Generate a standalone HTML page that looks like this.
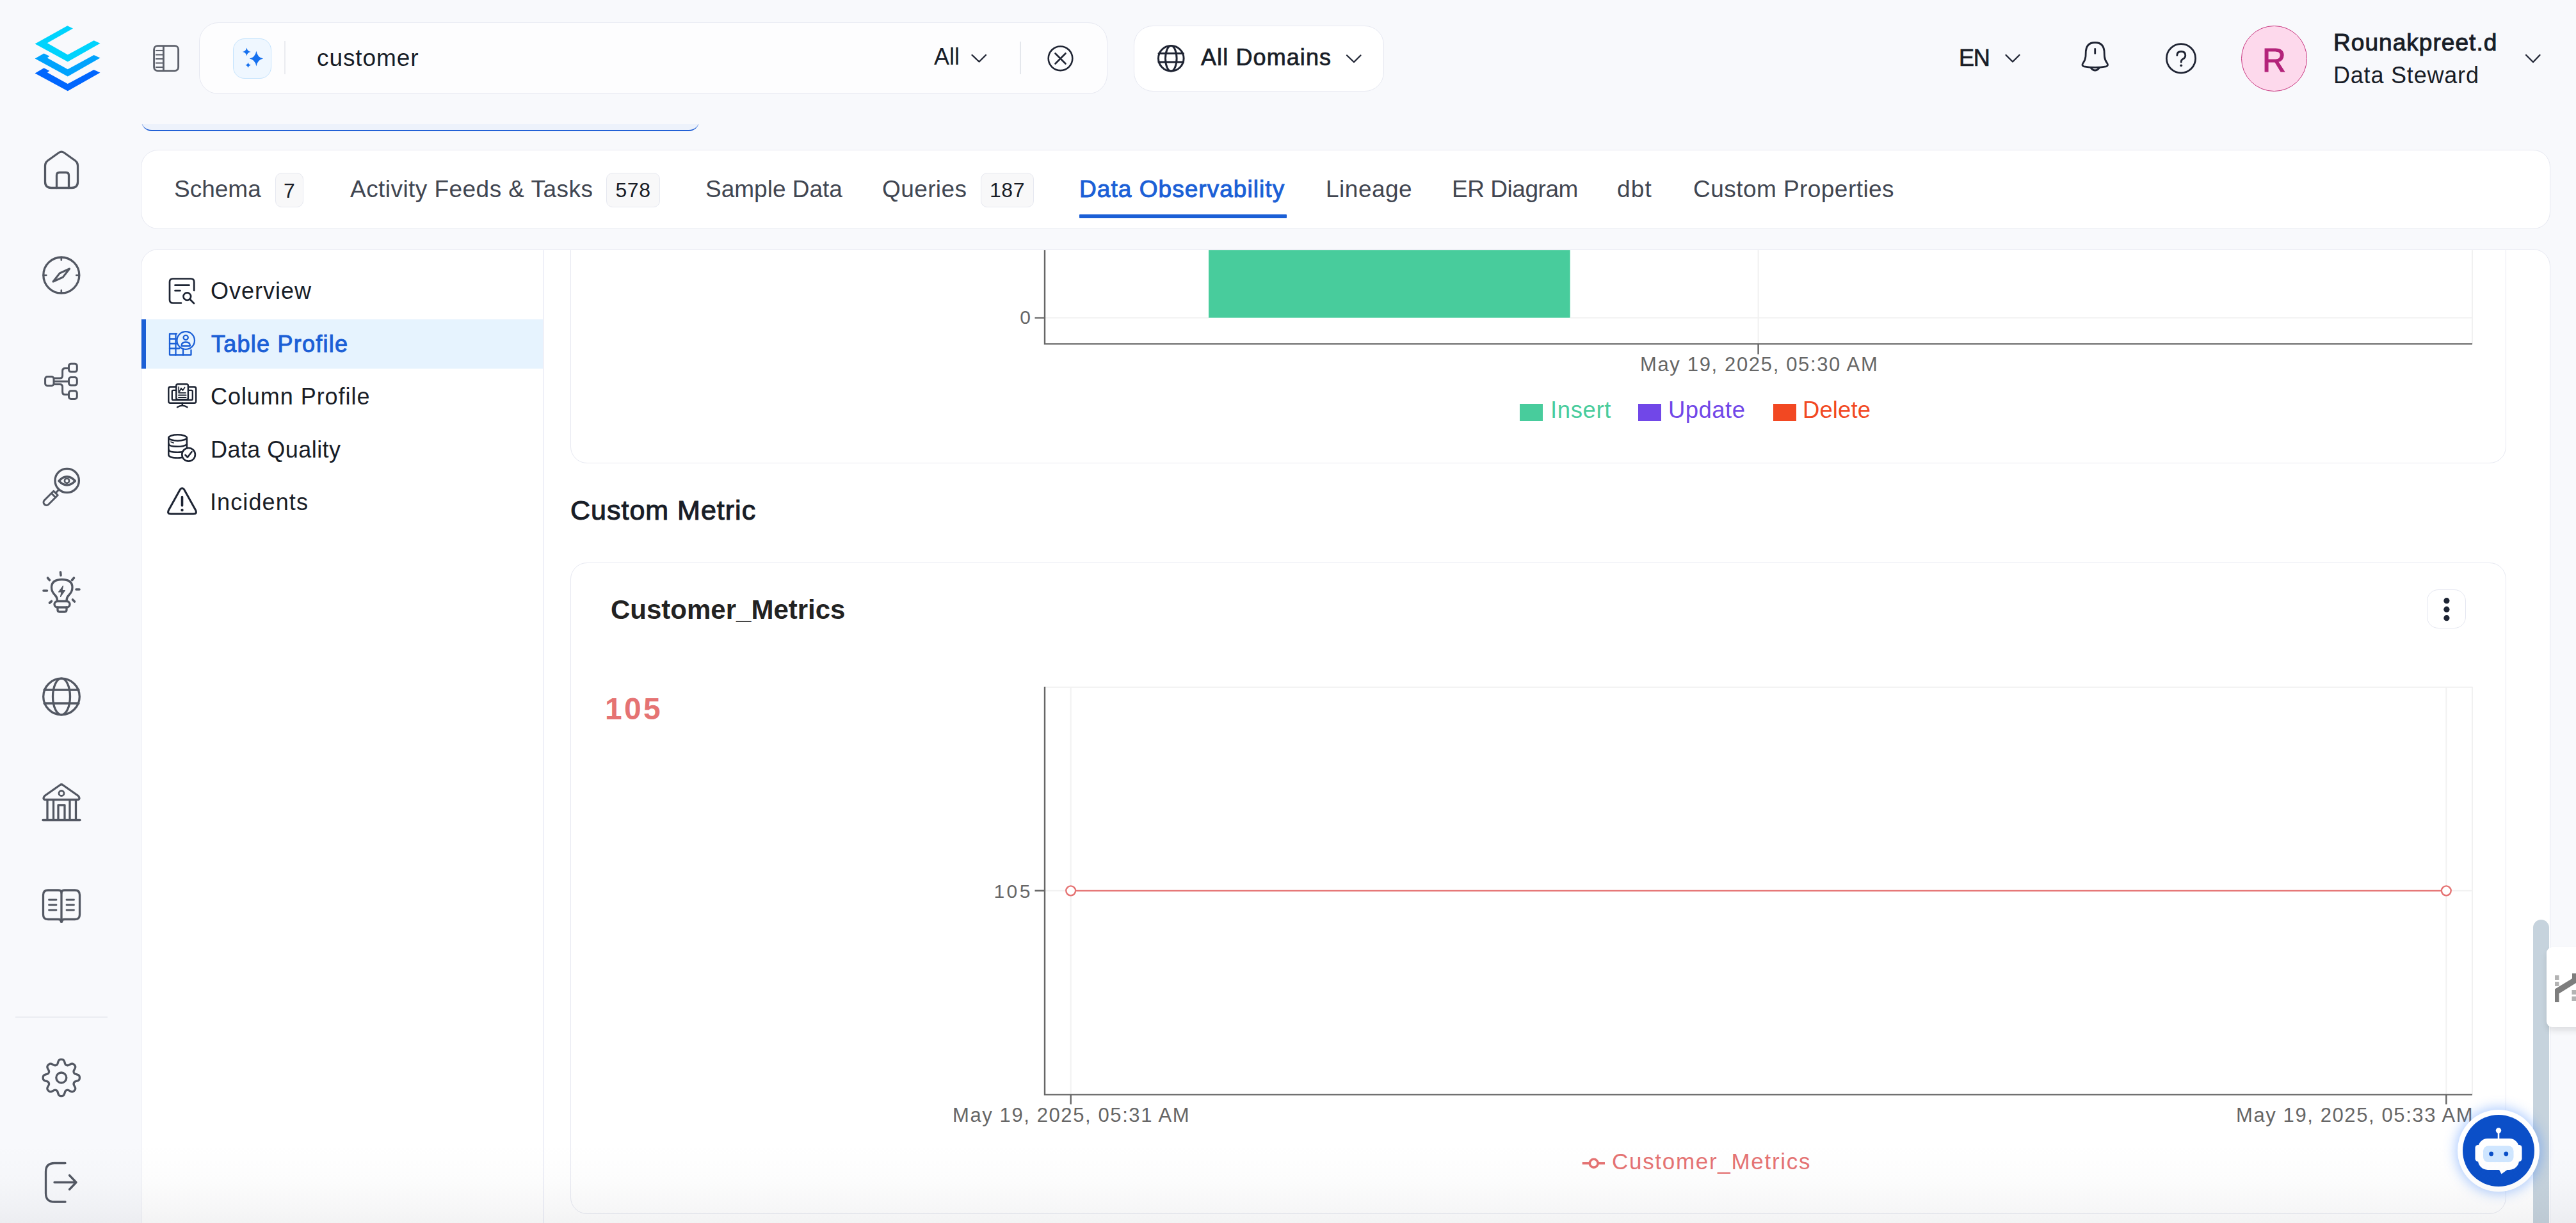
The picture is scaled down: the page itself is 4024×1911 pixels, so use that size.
<!DOCTYPE html>
<html><head><meta charset="utf-8">
<style>
html{margin:0;padding:0;overflow:hidden;width:4024px;height:1911px}body{margin:0;padding:0}
body{width:4024px;height:1911px;overflow:hidden;position:relative;background:#f8f9fc;font-family:"Liberation Sans",sans-serif;color:#181d27}
.a{position:absolute}
.t{position:absolute;white-space:nowrap;line-height:1;font-family:"Liberation Sans",sans-serif}
.card{position:absolute;background:#fff;border:1.5px solid #e6e8f1;box-sizing:border-box}
svg{position:absolute;overflow:visible}
</style></head>
<body>
<div id="root" style="position:absolute;left:0;top:0;width:4024px;height:1911px;overflow:hidden">

<!-- partial element hidden under header -->
<div class="a" style="left:221px;top:194px;width:871px;height:12px;overflow:hidden">
  <div class="a" style="left:0;top:-31px;width:871px;height:40px;background:#edf2fb;border-bottom:2px solid #2361d6;border-radius:0 0 16px 16px"></div>
</div>

<!-- HEADER -->
<!-- search box -->
<div class="card" style="left:311px;top:35px;width:1419px;height:112px;border-radius:30px;background:#fdfdfe"></div>
<div class="a" style="left:364px;top:60px;width:60px;height:63px;border-radius:18px;background:#eff7ff;border:1.6px solid #c4e3fd;box-sizing:border-box"></div>
<div class="a" style="left:444px;top:64px;width:2px;height:52px;background:#eaecf0"></div>
<div class="t" style="left:495px;top:71.7px;font-size:37px;letter-spacing:0.9px;color:#181d27">customer</div>
<div class="t" style="left:1459px;top:70.5px;font-size:36px;color:#181d27">All</div>
<div class="a" style="left:1593px;top:65px;width:2px;height:51px;background:#e4e7ec"></div>

<!-- domain dropdown -->
<div class="card" style="left:1771px;top:40px;width:391px;height:103px;border-radius:30px"></div>
<div class="t" style="left:1876px;top:72.1px;font-size:36px;letter-spacing:1.1px;-webkit-text-stroke:0.7px #181d27;color:#181d27">All Domains</div>

<!-- right header -->
<div class="t" style="left:3060px;top:72.5px;font-size:36px;letter-spacing:-1.2px;-webkit-text-stroke:0.7px #181d27;color:#181d27">EN</div>
<div class="a" style="left:3501px;top:40px;width:103px;height:103px;border-radius:50%;background:#fdd9ec;border:1.5px solid #c8357f;box-sizing:border-box"></div>
<div class="t" style="left:3501px;width:103px;text-align:center;top:68.6px;font-size:51px;-webkit-text-stroke:1.2px #b3237a;color:#b3237a">R</div>
<div class="t" style="left:3645px;top:47.7px;font-size:37px;font-weight:400;letter-spacing:1.05px;-webkit-text-stroke:1px #181d27;color:#181d27">Rounakpreet.d</div>
<div class="t" style="left:3645px;top:99.5px;font-size:36px;letter-spacing:0.8px;color:#181d27">Data Steward</div>

<!-- TABS CARD -->
<div class="card" style="left:220px;top:234px;width:3764px;height:124px;border-radius:27px"></div>
<div class="t" style="left:272px;top:277.2px;font-size:37px;color:#414651">Schema</div>
<div class="a" style="left:430px;top:270px;width:44px;height:54px;border-radius:10px;background:#f8f8f9;border:1.5px solid #e6e8f0;box-sizing:border-box"></div>
<div class="t" style="left:430px;width:44px;text-align:center;top:281.9px;font-size:32px;color:#181d27">7</div>
<div class="t" style="left:547px;top:277.2px;font-size:37px;letter-spacing:0.45px;color:#414651">Activity Feeds &amp; Tasks</div>
<div class="a" style="left:947px;top:270px;width:84px;height:54px;border-radius:10px;background:#f8f8f9;border:1.5px solid #e6e8f0;box-sizing:border-box"></div>
<div class="t" style="left:947px;width:84px;text-align:center;top:281.4px;font-size:32px;letter-spacing:0.5px;color:#181d27">578</div>
<div class="t" style="left:1102px;top:277.2px;font-size:37px;color:#414651">Sample Data</div>
<div class="t" style="left:1378px;top:277.2px;font-size:37px;letter-spacing:0.4px;color:#414651">Queries</div>
<div class="a" style="left:1532px;top:270px;width:83px;height:54px;border-radius:10px;background:#f8f8f9;border:1.5px solid #e6e8f0;box-sizing:border-box"></div>
<div class="t" style="left:1532px;width:83px;text-align:center;top:281.4px;font-size:32px;letter-spacing:0.5px;color:#181d27">187</div>
<div class="t" style="left:1686px;top:277.2px;font-size:37px;font-weight:400;letter-spacing:1.05px;-webkit-text-stroke:1px #1b5fd6;color:#1b5fd6">Data Observability</div>
<div class="a" style="left:1686px;top:335px;width:324px;height:6px;background:#1b5fd6;border-radius:1px"></div>
<div class="t" style="left:2071px;top:277.2px;font-size:37px;letter-spacing:0.5px;color:#414651">Lineage</div>
<div class="t" style="left:2268px;top:277.2px;font-size:37px;letter-spacing:-0.45px;color:#414651">ER Diagram</div>
<div class="t" style="left:2526px;top:277.2px;font-size:37px;letter-spacing:1.2px;color:#414651">dbt</div>
<div class="t" style="left:2645px;top:277.2px;font-size:37px;letter-spacing:0.45px;color:#414651">Custom Properties</div>

<!-- MAIN CARD -->
<div class="a" style="left:220px;top:388.5px;width:3764px;height:1560px;overflow:hidden;border:1.5px solid #e6e8f1;border-radius:27px;background:#fff;box-sizing:border-box" id="main">
</div>

<!-- left panel -->
<div class="a" style="left:848px;top:391px;width:2px;height:1520px;background:#eff0f8"></div>
<div class="a" style="left:223px;top:499px;width:625px;height:77px;background:#e6f3fe"></div>
<div class="a" style="left:221px;top:499px;width:7px;height:77px;background:#1b5fd6"></div>
<div class="t" style="left:329px;top:436.5px;font-size:36px;letter-spacing:1px;color:#181d27">Overview</div>
<div class="t" style="left:330px;top:520.2px;font-size:36px;font-weight:400;letter-spacing:1.25px;-webkit-text-stroke:1px #1b5fd6;color:#1b5fd6">Table Profile</div>
<div class="t" style="left:329px;top:601.5px;font-size:36px;letter-spacing:0.95px;color:#181d27">Column Profile</div>
<div class="t" style="left:329px;top:684.5px;font-size:36px;letter-spacing:0.45px;color:#181d27">Data Quality</div>
<div class="t" style="left:328px;top:767px;font-size:36px;letter-spacing:1.1px;color:#181d27">Incidents</div>

<!-- chart card 1 (clipped at top) -->
<div class="a" style="left:223px;top:391px;width:3758px;height:340px;overflow:hidden">
  <div class="card" style="left:668px;top:-100px;width:3024px;height:433px;border-radius:26px"></div>
</div>

<!-- Custom Metric -->
<div class="t" style="left:891px;top:775.6px;font-size:43px;font-weight:400;letter-spacing:1px;-webkit-text-stroke:1.1px #181d27;color:#181d27">Custom Metric</div>

<!-- chart card 2 -->
<div class="card" style="left:891px;top:879px;width:3024px;height:1018px;border-radius:26px"></div>
<div class="t" style="left:954px;top:931.9px;font-size:42px;font-weight:700;letter-spacing:0px;color:#222">Customer_Metrics</div>
<div class="a" style="left:3791px;top:921px;width:61px;height:61px;border-radius:18px;border:1.5px solid #e4e6f0;box-sizing:border-box;background:#fff"></div>
<div class="t" style="left:945px;top:1083.8px;font-size:48px;font-weight:700;letter-spacing:3.3px;color:#e57373">105</div>

<!-- chart text -->
<div class="t" style="left:1560px;width:50px;text-align:right;top:481.4px;font-size:30px;color:#666">0</div>
<div class="t" style="left:2562px;top:553.8px;font-size:31px;letter-spacing:1.65px;color:#666">May 19, 2025, 05:30 AM</div>
<div class="t" style="left:2422px;top:623.1px;font-size:36.5px;letter-spacing:0.6px;color:#48cc9c">Insert</div>
<div class="t" style="left:2606px;top:623.1px;font-size:36.5px;letter-spacing:0.45px;color:#7147e8">Update</div>
<div class="t" style="left:2816px;top:623.1px;font-size:36.5px;letter-spacing:0.1px;color:#f24822">Delete</div>
<div class="a" style="left:2374px;top:631px;width:36px;height:27px;background:#48cc9c"></div>
<div class="a" style="left:2559px;top:631px;width:36px;height:27px;background:#7147e8"></div>
<div class="a" style="left:2770px;top:631px;width:36px;height:27px;background:#f24822"></div>

<div class="t" style="left:1503px;width:110px;text-align:right;top:1377.6px;font-size:30px;letter-spacing:3.5px;color:#666">105</div>
<div class="t" style="left:1488px;top:1727.2px;font-size:31px;letter-spacing:1.6px;color:#666">May 19, 2025, 05:31 AM</div>
<div class="t" style="left:3493px;top:1727.2px;font-size:31px;letter-spacing:1.6px;color:#666">May 19, 2025, 05:33 AM</div>
<div class="t" style="left:2518px;top:1797.4px;font-size:35px;letter-spacing:1.7px;color:#e57373">Customer_Metrics</div>

<!-- ICONS & CHART GRAPHICS -->
<svg id="gfx" width="4024" height="1911" style="left:0;top:0" viewBox="0 0 4024 1911">
<!-- logo -->
<g transform="translate(54.6,40.2)">
<path fill="#00d3fd" d="M50.7,0 L59.4,4.3 L19.2,27 L51.2,45.4 L92,23 L101.9,27.6 L51.2,56.4 L0,28.2 Z"/>
<path fill="#00a2fd" d="M14,43.3 L22.7,47.6 L19.2,50.3 L51.2,68 L92,45.9 L101.9,50.3 L51.2,79.4 L0,51.2 Z"/>
<path fill="#0066fe" d="M14,66 L22.7,70.5 L19.2,73 L51.2,90.8 L92,68.7 L101.9,73.4 L51.2,102.1 L0,74.2 Z"/>
</g>
<!-- sidebar toggle -->
<g fill="none" stroke="#5d616b" stroke-width="2.9" stroke-linejoin="round">
<rect x="240.6" y="71.6" width="38" height="39" rx="5.5"/>
<line x1="255.4" y1="71.6" x2="255.4" y2="110.6"/>
<g stroke-width="2.1"><line x1="243" y1="79" x2="254" y2="79"/><line x1="243" y1="85.5" x2="254" y2="85.5"/><line x1="243" y1="92" x2="254" y2="92"/><line x1="243" y1="98.5" x2="254" y2="98.5"/><line x1="243" y1="105" x2="254" y2="105"/></g>
</g>
<!-- nav icons -->
<g fill="none" stroke="#535863" stroke-width="3.3" stroke-linecap="round" stroke-linejoin="round">
 <!-- home -->
 <path d="M70.5,259 Q70.5,254 74.5,251 L92,238.5 Q96,235.8 100,238.5 L117.5,251 Q121.5,254 121.5,259 L121.5,284 Q121.5,293.5 112,293.5 L80,293.5 Q70.5,293.5 70.5,284 Z"/>
 <path d="M88.5,293.5 L88.5,274 Q88.5,269.5 93,269.5 L103,269.5 Q107.5,269.5 107.5,274 L107.5,293.5"/>
 <!-- compass -->
 <circle cx="95.8" cy="430" r="28"/>
 <path d="M95.8,402 v4.5 M95.8,453.5 v4.5 M67.8,430 h4.5 M119.3,430 h4.5" stroke-width="2.6"/>
 <path d="M83,440 L93.3,426.9 L108.5,420 L98.3,433.1 Z" stroke-width="3.1"/>
 <!-- lineage -->
 <g stroke-width="3"><rect x="70.6" y="588.5" width="13.4" height="14.2" rx="3.5"/>
 <rect x="107.5" y="568.3" width="12.8" height="12.8" rx="3.5"/>
 <rect x="107.5" y="589.5" width="12.8" height="12.6" rx="3.5"/>
 <rect x="107.5" y="610.8" width="12.8" height="12.6" rx="3.5"/>
 <path d="M84.5,591 L93.5,591 Q97.6,591 97.6,587 L97.6,579.5 Q97.6,575.5 101.5,575.5 L107,575.5 M84.5,596 L107,596 M84.5,600.5 L93.5,600.5 Q97.6,600.5 97.6,604.5 L97.6,612.5 Q97.6,616.5 101.5,616.5 L107,616.5" stroke-linecap="butt"/></g>
 <!-- observability -->
 <circle cx="104.7" cy="751" r="18.7"/>
 <path d="M92,751.5 Q104.5,738 117.5,751.5 Q104.5,764.5 92,751.5 Z" stroke-width="3.4"/>
 <circle cx="104.5" cy="751.3" r="3.6" stroke-width="2.6"/>
 <path d="M87.5,769.8 L92,765" stroke-width="3"/>
 <path d="M90.25,773.75 L83.75,767.25 L69.25,781.75 A4.6,4.6 0 0 0 75.75,788.25 Z" stroke-width="3"/>
 <path d="M80.5,771 L86.8,777.3" stroke-width="2.8"/>
 <!-- bulb -->
 <path d="M89.5,938 Q89.5,933.5 86,930 Q80.5,924.5 80.5,918 Q80.5,905.5 96.8,905.5 Q113,905.5 113,918 Q113,924.5 107.5,930 Q104,933.5 104,938" />
 <rect x="85" y="939.5" width="24" height="9.5" rx="4.75"/>
 <path d="M90,949 L90,953 Q90,956 93,956 L101,956 Q104,956 104,953 L104,949"/>
 <path d="M98.5,915.5 L91.5,925 L96,925 L94.5,932.5 L101.5,922.5 L97,922.5 Z" fill="#535863" stroke-width="1.2"/>
 <path d="M94.5,894 L95,899 M74.5,903 L77.5,906.5 M112.5,906.5 L115.5,903 M68,923 L73.5,923 M119,921 L124,921 M77.5,942 L80.5,939.5 M113.5,937 L116.5,940" stroke-width="3.6"/>
 <!-- globe -->
 <circle cx="96" cy="1088.5" r="28.3"/>
 <ellipse cx="96" cy="1088.5" rx="13.5" ry="28.3"/>
 <path d="M69,1078 L123,1078 M69,1099 L123,1099"/>
 <!-- governance -->
 <path d="M70.5,1243 L94,1226.5 Q96,1225 98,1226.5 L121.5,1243 Q124,1245 124,1247 Q124,1249.5 121,1249.5 L71,1249.5 Q68,1249.5 68,1247 Q68,1245 70.5,1243 Z"/>
 <circle cx="96" cy="1239.5" r="4" stroke-width="2.8"/>
 <path d="M74,1251 L74,1280 M83.5,1251 L83.5,1280 M109,1251 L109,1280 M118.5,1251 L118.5,1280"/>
 <path d="M91,1280 L91,1258 L101,1258 L101,1280"/>
 <path d="M67,1281.5 L125,1281.5"/>
 <!-- glossary -->
 <path d="M96,1395 Q96,1391 91,1391 L75,1391 Q67.5,1391 67.5,1398.5 L67.5,1429 Q67.5,1436.5 75,1436.5 L91,1436.5 Q96,1436.5 96,1440 Q96,1436.5 101,1436.5 L117,1436.5 Q124.5,1436.5 124.5,1429 L124.5,1398.5 Q124.5,1391 117,1391 L101,1391 Q96,1391 96,1395 Z"/>
 <path d="M96,1395 L96,1438"/>
 <path d="M76.5,1406 L88,1406 M76.5,1414 L88,1414 M76.5,1422 L88,1422 M104,1406 L115.5,1406 M104,1414 L115.5,1414 M104,1422 L115.5,1422" stroke-width="2.8"/>
 <circle cx="96" cy="1439.5" r="2.5" fill="#535863" stroke="none"/>
 <!-- gear -->
 <path d="M95.80,1655.40L96.17,1655.41L96.55,1655.43L96.92,1655.48L97.29,1655.54L97.66,1655.62L98.02,1655.74L98.38,1655.88L98.74,1656.07L99.08,1656.31L99.41,1656.61L99.72,1656.97L100.01,1657.41L100.28,1657.93L100.52,1658.51L100.74,1659.14L100.94,1659.80L101.13,1660.45L101.31,1661.07L101.48,1661.63L101.66,1662.12L101.85,1662.54L102.05,1662.90L102.26,1663.20L102.47,1663.46L102.70,1663.68L102.93,1663.87L103.17,1664.03L103.41,1664.17L103.66,1664.30L103.91,1664.41L104.17,1664.51L104.44,1664.60L104.71,1664.67L105.00,1664.72L105.29,1664.75L105.60,1664.76L105.94,1664.73L106.30,1664.66L106.69,1664.55L107.13,1664.38L107.60,1664.16L108.12,1663.89L108.68,1663.58L109.28,1663.25L109.88,1662.93L110.48,1662.63L111.07,1662.39L111.62,1662.22L112.14,1662.12L112.62,1662.08L113.06,1662.10L113.47,1662.18L113.85,1662.29L114.21,1662.44L114.55,1662.62L114.87,1662.82L115.18,1663.04L115.47,1663.27L115.75,1663.52L116.02,1663.78L116.28,1664.05L116.53,1664.33L116.76,1664.62L116.98,1664.93L117.18,1665.25L117.36,1665.59L117.51,1665.95L117.62,1666.33L117.70,1666.74L117.72,1667.18L117.68,1667.66L117.58,1668.18L117.41,1668.73L117.17,1669.32L116.87,1669.92L116.55,1670.52L116.22,1671.12L115.91,1671.68L115.64,1672.20L115.42,1672.67L115.25,1673.11L115.14,1673.50L115.07,1673.86L115.04,1674.20L115.05,1674.51L115.08,1674.80L115.13,1675.09L115.20,1675.36L115.29,1675.63L115.39,1675.89L115.50,1676.14L115.63,1676.39L115.77,1676.63L115.93,1676.87L116.12,1677.10L116.34,1677.33L116.60,1677.54L116.90,1677.75L117.26,1677.95L117.68,1678.14L118.17,1678.32L118.73,1678.49L119.35,1678.67L120.00,1678.86L120.66,1679.06L121.29,1679.28L121.87,1679.52L122.39,1679.79L122.83,1680.08L123.19,1680.39L123.49,1680.72L123.73,1681.06L123.92,1681.42L124.06,1681.78L124.18,1682.14L124.26,1682.51L124.32,1682.88L124.37,1683.25L124.39,1683.63L124.40,1684.00L124.39,1684.37L124.37,1684.75L124.32,1685.12L124.26,1685.49L124.18,1685.86L124.06,1686.22L123.92,1686.58L123.73,1686.94L123.49,1687.28L123.19,1687.61L122.83,1687.92L122.39,1688.21L121.87,1688.48L121.29,1688.72L120.66,1688.94L120.00,1689.14L119.35,1689.33L118.73,1689.51L118.17,1689.68L117.68,1689.86L117.26,1690.05L116.90,1690.25L116.60,1690.46L116.34,1690.67L116.12,1690.90L115.93,1691.13L115.77,1691.37L115.63,1691.61L115.50,1691.86L115.39,1692.11L115.29,1692.37L115.20,1692.64L115.13,1692.91L115.08,1693.20L115.05,1693.49L115.04,1693.80L115.07,1694.14L115.14,1694.50L115.25,1694.89L115.42,1695.33L115.64,1695.80L115.91,1696.32L116.22,1696.88L116.55,1697.48L116.87,1698.08L117.17,1698.68L117.41,1699.27L117.58,1699.82L117.68,1700.34L117.72,1700.82L117.70,1701.26L117.62,1701.67L117.51,1702.05L117.36,1702.41L117.18,1702.75L116.98,1703.07L116.76,1703.38L116.53,1703.67L116.28,1703.95L116.02,1704.22L115.75,1704.48L115.47,1704.73L115.18,1704.96L114.87,1705.18L114.55,1705.38L114.21,1705.56L113.85,1705.71L113.47,1705.82L113.06,1705.90L112.62,1705.92L112.14,1705.88L111.62,1705.78L111.07,1705.61L110.48,1705.37L109.88,1705.07L109.28,1704.75L108.68,1704.42L108.12,1704.11L107.60,1703.84L107.13,1703.62L106.69,1703.45L106.30,1703.34L105.94,1703.27L105.60,1703.24L105.29,1703.25L105.00,1703.28L104.71,1703.33L104.44,1703.40L104.17,1703.49L103.91,1703.59L103.66,1703.70L103.41,1703.83L103.17,1703.97L102.93,1704.13L102.70,1704.32L102.47,1704.54L102.26,1704.80L102.05,1705.10L101.85,1705.46L101.66,1705.88L101.48,1706.37L101.31,1706.93L101.13,1707.55L100.94,1708.20L100.74,1708.86L100.52,1709.49L100.28,1710.07L100.01,1710.59L99.72,1711.03L99.41,1711.39L99.08,1711.69L98.74,1711.93L98.38,1712.12L98.02,1712.26L97.66,1712.38L97.29,1712.46L96.92,1712.52L96.55,1712.57L96.17,1712.59L95.80,1712.60L95.43,1712.59L95.05,1712.57L94.68,1712.52L94.31,1712.46L93.94,1712.38L93.58,1712.26L93.22,1712.12L92.86,1711.93L92.52,1711.69L92.19,1711.39L91.88,1711.03L91.59,1710.59L91.32,1710.07L91.08,1709.49L90.86,1708.86L90.66,1708.20L90.47,1707.55L90.29,1706.93L90.12,1706.37L89.94,1705.88L89.75,1705.46L89.55,1705.10L89.34,1704.80L89.13,1704.54L88.90,1704.32L88.67,1704.13L88.43,1703.97L88.19,1703.83L87.94,1703.70L87.69,1703.59L87.43,1703.49L87.16,1703.40L86.89,1703.33L86.60,1703.28L86.31,1703.25L86.00,1703.24L85.66,1703.27L85.30,1703.34L84.91,1703.45L84.47,1703.62L84.00,1703.84L83.48,1704.11L82.92,1704.42L82.32,1704.75L81.72,1705.07L81.12,1705.37L80.53,1705.61L79.98,1705.78L79.46,1705.88L78.98,1705.92L78.54,1705.90L78.13,1705.82L77.75,1705.71L77.39,1705.56L77.05,1705.38L76.73,1705.18L76.42,1704.96L76.13,1704.73L75.85,1704.48L75.58,1704.22L75.32,1703.95L75.07,1703.67L74.84,1703.38L74.62,1703.07L74.42,1702.75L74.24,1702.41L74.09,1702.05L73.98,1701.67L73.90,1701.26L73.88,1700.82L73.92,1700.34L74.02,1699.82L74.19,1699.27L74.43,1698.68L74.73,1698.08L75.05,1697.48L75.38,1696.88L75.69,1696.32L75.96,1695.80L76.18,1695.33L76.35,1694.89L76.46,1694.50L76.53,1694.14L76.56,1693.80L76.55,1693.49L76.52,1693.20L76.47,1692.91L76.40,1692.64L76.31,1692.37L76.21,1692.11L76.10,1691.86L75.97,1691.61L75.83,1691.37L75.67,1691.13L75.48,1690.90L75.26,1690.67L75.00,1690.46L74.70,1690.25L74.34,1690.05L73.92,1689.86L73.43,1689.68L72.87,1689.51L72.25,1689.33L71.60,1689.14L70.94,1688.94L70.31,1688.72L69.73,1688.48L69.21,1688.21L68.77,1687.92L68.41,1687.61L68.11,1687.28L67.87,1686.94L67.68,1686.58L67.54,1686.22L67.42,1685.86L67.34,1685.49L67.28,1685.12L67.23,1684.75L67.21,1684.37L67.20,1684.00L67.21,1683.63L67.23,1683.25L67.28,1682.88L67.34,1682.51L67.42,1682.14L67.54,1681.78L67.68,1681.42L67.87,1681.06L68.11,1680.72L68.41,1680.39L68.77,1680.08L69.21,1679.79L69.73,1679.52L70.31,1679.28L70.94,1679.06L71.60,1678.86L72.25,1678.67L72.87,1678.49L73.43,1678.32L73.92,1678.14L74.34,1677.95L74.70,1677.75L75.00,1677.54L75.26,1677.33L75.48,1677.10L75.67,1676.87L75.83,1676.63L75.97,1676.39L76.10,1676.14L76.21,1675.89L76.31,1675.63L76.40,1675.36L76.47,1675.09L76.52,1674.80L76.55,1674.51L76.56,1674.20L76.53,1673.86L76.46,1673.50L76.35,1673.11L76.18,1672.67L75.96,1672.20L75.69,1671.68L75.38,1671.12L75.05,1670.52L74.73,1669.92L74.43,1669.32L74.19,1668.73L74.02,1668.18L73.92,1667.66L73.88,1667.18L73.90,1666.74L73.98,1666.33L74.09,1665.95L74.24,1665.59L74.42,1665.25L74.62,1664.93L74.84,1664.62L75.07,1664.33L75.32,1664.05L75.58,1663.78L75.85,1663.52L76.13,1663.27L76.42,1663.04L76.73,1662.82L77.05,1662.62L77.39,1662.44L77.75,1662.29L78.13,1662.18L78.54,1662.10L78.98,1662.08L79.46,1662.12L79.98,1662.22L80.53,1662.39L81.12,1662.63L81.72,1662.93L82.32,1663.25L82.92,1663.58L83.48,1663.89L84.00,1664.16L84.47,1664.38L84.91,1664.55L85.30,1664.66L85.66,1664.73L86.00,1664.76L86.31,1664.75L86.60,1664.72L86.89,1664.67L87.16,1664.60L87.43,1664.51L87.69,1664.41L87.94,1664.30L88.19,1664.17L88.43,1664.03L88.67,1663.87L88.90,1663.68L89.13,1663.46L89.34,1663.20L89.55,1662.90L89.75,1662.54L89.94,1662.12L90.12,1661.63L90.29,1661.07L90.47,1660.45L90.66,1659.80L90.86,1659.14L91.08,1658.51L91.32,1657.93L91.59,1657.41L91.88,1656.97L92.19,1656.61L92.52,1656.31L92.86,1656.07L93.22,1655.88L93.58,1655.74L93.94,1655.62L94.31,1655.54L94.68,1655.48L95.05,1655.43L95.43,1655.41L95.80,1655.40Z" />
 <circle cx="95.8" cy="1684" r="8"/>
 <!-- logout -->
 <path d="M102,1817.5 L85,1817.5 Q71.5,1817.5 71.5,1831 L71.5,1864.5 Q71.5,1878 85,1878 L102,1878"/>
 <path d="M85,1847.5 L119,1847.5 M108.5,1836.5 L119,1847.5 L108.5,1858.5"/>
</g>
<!-- nav divider -->
<rect x="24" y="1588.5" width="144" height="1.6" fill="#e6e8ee"/>
<!-- header icons -->
<g fill="#1570ef">
 <path d="M400.4,79.7 Q402.2,89.8 411,91.6 Q402.2,93.4 400.4,103.4 Q398.6,93.4 389.8,91.6 Q398.6,89.8 400.4,79.7 Z"/>
 <path d="M385.3,74.4 Q386.3,80 391.8,80.9 Q386.3,81.8 385.3,87.4 Q384.3,81.8 378.8,80.9 Q384.3,80 385.3,74.4 Z"/>
 <path d="M387.6,97.3 Q388.3,101.1 392.1,101.8 Q388.3,102.5 387.6,106.3 Q386.9,102.5 383.1,101.8 Q386.9,101.1 387.6,97.3 Z"/>
</g>
<g fill="none" stroke="#1f2433" stroke-width="2.6" stroke-linecap="round" stroke-linejoin="round">
 <circle cx="1656.5" cy="91.3" r="18.8"/>
 <path d="M1648.5,83.5 L1664.5,99.5 M1664.5,83.5 L1648.5,99.5"/>
 <g stroke-width="2.3"><path d="M1518.5,86 L1529.5,96.5 L1540,86"/>
 <path d="M2104,86.5 L2115,97 L2125.5,86.5"/>
 <path d="M3133.5,86 L3144,96.5 L3154.5,86"/>
 <path d="M3946,86 L3957,97 L3967.5,86"/></g>
 <g stroke-width="3"><circle cx="1829.3" cy="91.3" r="19.8"/>
 <ellipse cx="1829.3" cy="91.3" rx="8.8" ry="19.8"/>
 <path d="M1810,83.5 L1848.5,83.5 M1810,97 L1848.5,97"/></g>
 <g stroke-width="2.8">
 <path d="M3258.2,83 Q3258.2,66.5 3272.7,66.5 Q3287.2,66.5 3287.2,83 L3287.4,88 Q3288,94 3291.5,98.5 Q3294.2,102.5 3290,103.8 Q3272.7,107 3255.4,103.8 Q3251.2,102.5 3254,98.5 Q3257.5,94 3258,88 Z"/>
 <path d="M3266.5,106.5 Q3272.7,113.5 3279,106.5"/>
 <path d="M3272.7,76.5 L3272.7,83.5"/>
 <circle cx="3407" cy="91.3" r="22.6"/>
 <path d="M3400.8,86.5 Q3400.8,80.5 3407.2,80.5 Q3413.8,80.5 3413.8,86.5 Q3413.8,90.5 3409.5,92.5 Q3407.2,93.8 3407.2,97"/>
 </g>
 <circle cx="3407.2" cy="102.3" r="1.9" fill="#1f2433" stroke="none"/>
</g>
<!-- left menu icons -->
<g fill="none" stroke="#1d2433" stroke-width="2.7" stroke-linecap="round" stroke-linejoin="round">
 <!-- overview -->
 <path d="M303.2,454 L303.2,440.5 Q303.2,435.5 298.2,435.5 L270,435.5 Q265,435.5 265,440.5 L265,468.5 Q265,473.5 270,473.5 L283,473.5"/>
 <path d="M273.5,445.7 L295.5,445.7 M273.5,454.2 L281.5,454.2"/>
 <circle cx="292.3" cy="463.2" r="5.8"/>
 <path d="M296.8,467.8 L303,474"/>
 <!-- column profile -->
 <path d="M275,604.5 L266,604.5 Q263.3,604.5 263.3,607.5 L263.3,627 Q263.3,629.8 266,629.8 L303.5,629.8 Q306.2,629.8 306.2,627 L306.2,607.5 Q306.2,604.5 303.5,604.5 L294,604.5" stroke-width="2.5"/>
 <path d="M275,609.8 L270.5,609.8 Q268.8,609.8 268.8,611.5 L268.8,623.3 Q268.8,625 270.5,625 L299,625 Q300.8,625 300.8,623.3 L300.8,611.5 Q300.8,609.8 299,609.8 L294,609.8" stroke-width="2.3"/>
 <rect x="275.3" y="600.3" width="18.6" height="24" rx="2.5" stroke-width="2.5"/>
 <path d="M279.2,604.5 L279.2,613.8 L290,613.8 M280.5,611.5 L283,606.5 L285.5,610 L288.5,605.5" stroke-width="1.7"/>
 <path d="M279,617.6 L290.5,617.6 M279,621 L290.5,621" stroke-width="2"/>
 <path d="M284.8,629.8 L284.8,633.5 M277,636.3 Q284.8,631 292.5,636.3" stroke-width="2.5"/>
 <!-- data quality -->
 <ellipse cx="277.6" cy="684" rx="14.3" ry="4.7" stroke-width="2.6"/>
 <path d="M263.3,684 L263.3,710.5 Q263.3,715.5 277.6,715.5 Q280.5,715.5 284,715" stroke-width="2.6"/>
 <path d="M291.9,684 L291.9,699" stroke-width="2.6"/>
 <path d="M263.3,693 Q263.3,697.8 277.6,697.8 Q287,697.8 291.9,694.5" stroke-width="2.5"/>
 <path d="M263.3,702 Q263.3,706.8 277.6,706.8 Q281,706.8 284.5,706.3" stroke-width="2.5"/>
 <path d="M267,690.5 L271,692" stroke-width="1.8"/>
 <circle cx="294.6" cy="710.3" r="10.3" stroke-width="2.6"/>
 <path d="M289.5,711 L293,714.5 L299.5,706" stroke-width="2.6"/>
 <!-- incidents -->
 <path d="M281,765.5 Q284.5,760 288,765.5 L305.5,797 Q308.5,803 302,803 L267,803 Q260.5,803 263.5,797 Z" stroke-width="3"/>
 <path d="M284.5,776.5 L284.5,790" stroke-width="3.6"/>
 <circle cx="284.5" cy="797" r="2.2" fill="#1d2433" stroke="none"/>
</g>
<!-- table profile icon (blue) -->
<g fill="none" stroke="#1b5fd6" stroke-width="2.3" stroke-linecap="round" stroke-linejoin="round">
 <circle cx="290.2" cy="532" r="13.8"/>
 <circle cx="290.2" cy="527.5" r="3.6"/>
 <path d="M283.5,540.5 Q283.5,534.5 290.2,534.5 Q297,534.5 297,540.5 Z"/>
 <path d="M276,521.5 L265,521.5 L265,554.5 L298.5,554.5 L298.5,547"/>
 <path d="M265,529.5 L275.5,529.5 M265,537 L276.5,537 M265,544.5 L280,544.5 M274.5,521.5 L274.5,554.5 M286,546 L286,554.5 M265,554.5"/>
</g>
<!-- 3 dots -->
<g fill="#1d2433"><circle cx="3821.9" cy="938.7" r="4.6"/><circle cx="3821.9" cy="952.2" r="4.6"/><circle cx="3821.9" cy="965.7" r="4.6"/></g>
<!-- CHART 1 -->
<rect x="1888" y="391" width="564.7" height="105.6" fill="#48cc9c"/>
<g stroke="#f1f1f1" stroke-width="2" fill="none">
 <path d="M1633,496.6 L1888,496.6 M2452.7,496.6 L3862,496.6"/>
 <path d="M2746.6,391 L2746.6,537 M3862,391 L3862,537"/>
</g>
<g stroke="#666" stroke-width="2.4" fill="none">
 <path d="M1632,391 L1632,537.4 L3862,537.4"/>
 <path d="M1616.5,496.6 L1632,496.6 M2746.6,537.4 L2746.6,553.5"/>
</g>
<!-- CHART 2 -->
<g stroke="#f1f1f1" stroke-width="2" fill="none">
 <path d="M1633,1073.8 L3862,1073.8 M1633,1391.8 L3862,1391.8"/>
 <path d="M1672.7,1073 L1672.7,1710 M3821.3,1073 L3821.3,1710 M3862,1073 L3862,1710"/>
</g>
<g stroke="#666" stroke-width="2.4" fill="none">
 <path d="M1632,1073 L1632,1710.4 L3862,1710.4"/>
 <path d="M1616.5,1391.8 L1632,1391.8 M1672.7,1710.4 L1672.7,1725.5 M3821.3,1710.4 L3821.3,1725.5"/>
</g>
<path d="M1672.7,1391.8 L3821.3,1391.8" stroke="#e57373" stroke-width="2.2"/>
<g stroke="#e57373" stroke-width="2.4" fill="#fff">
 <circle cx="1672.7" cy="1391.8" r="7.4"/>
 <circle cx="3821.3" cy="1391.8" r="7.4"/>
</g>
<path d="M2471.7,1817.7 L2507,1817.7" stroke="#e57373" stroke-width="3.6"/>
<circle cx="2489.7" cy="1817.7" r="6.4" stroke="#e57373" stroke-width="3.6" fill="#fff"/>
</svg>

<!-- scrollbar -->
<div class="a" style="left:3957px;top:1437px;width:25px;height:490px;border-radius:12.5px;background:#c6d3dd"></div>
<!-- side tab -->
<div class="a" style="left:3978px;top:1480px;width:60px;height:125px;border-radius:9px;background:#fff;box-shadow:0 6px 10px rgba(0,0,0,0.10)"></div>
<svg width="4024" height="1911" style="left:0;top:0" viewBox="0 0 4024 1911">
 <path d="M3991,1566 L3991,1545.5 L4018,1529 L4018,1521 L4025,1521 L4025,1535.5 L3997.5,1552.5 L3997.5,1566 Z" fill="#7d7d7d"/>
 <g fill="#b3b3b3"><rect x="3991" y="1524" width="6.5" height="7"/><rect x="3991" y="1534" width="6.5" height="7"/><rect x="4017.5" y="1547" width="6.5" height="7"/><rect x="4017.5" y="1557" width="6.5" height="7"/></g>
</svg>

<!-- chatbot -->
<div class="a" style="left:3839px;top:1734px;width:128px;height:128px;border-radius:50%;background:#fff;box-shadow:0 0 18px 4px rgba(40,120,255,0.35)"></div>
<div class="a" style="left:3847px;top:1742px;width:112px;height:112px;border-radius:50%;background:#0b4fc8"></div>
<svg width="4024" height="1911" style="left:0;top:0" viewBox="0 0 4024 1911">
 <path d="M3903,1779 L3903,1768" stroke="#fff" stroke-width="2.6"/>
 <circle cx="3903" cy="1766.5" r="4.2" fill="#fff"/>
 <rect x="3866.5" y="1789" width="9" height="26" rx="4.5" fill="#fff"/>
 <rect x="3930.5" y="1789" width="9" height="26" rx="4.5" fill="#fff"/>
 <rect x="3871" y="1779" width="64" height="49" rx="15" fill="#fff"/>
 <path d="M3903,1826 L3907.5,1834.5 L3922,1824 Z" fill="#fff"/>
 <rect x="3879" y="1790.5" width="47.5" height="25.5" rx="8" fill="#cfe6ff"/>
 <circle cx="3891.6" cy="1803" r="3.4" fill="#0b4fc8"/>
 <circle cx="3914.8" cy="1803" r="3.4" fill="#0b4fc8"/>
</svg>

<!-- bottom fade -->
<div class="a" style="left:0;top:1785px;width:4024px;height:126px;background:linear-gradient(to bottom,rgba(30,35,50,0) 0%,rgba(30,35,50,0.012) 45%,rgba(30,35,50,0.035) 80%,rgba(30,35,50,0.055) 100%)"></div>

</div>
</body></html>
